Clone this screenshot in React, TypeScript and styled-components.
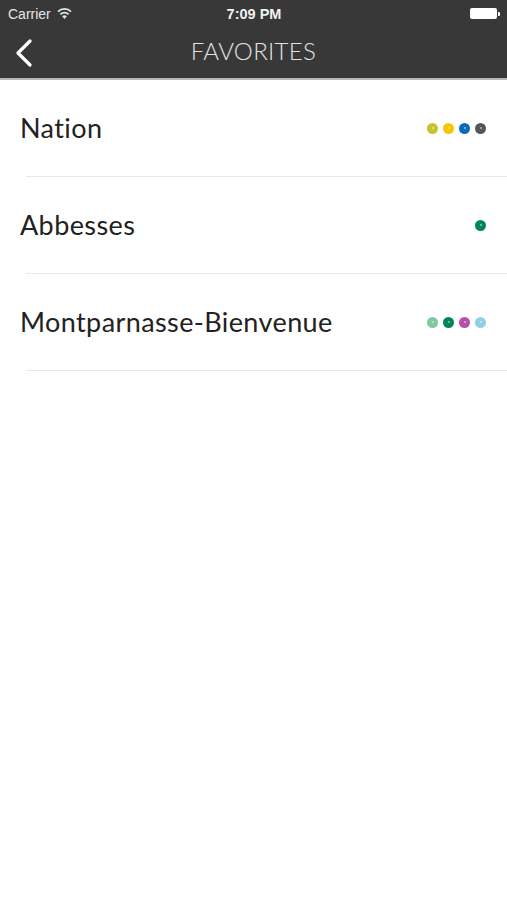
import * as React from 'react';
import styled, { createGlobalStyle } from 'styled-components';

const GlobalStyle = createGlobalStyle`
  html, body {
    margin: 0;
    padding: 0;
    background: #ffffff;
  }
  body {
    font-family: Lato, "Open Sans", "Liberation Sans", sans-serif;
  }
`;

const Screen = styled.div`
  width: 507px;
  height: 900px;
  background: #ffffff;
  display: flex;
  flex-direction: column;
`;

// barre de statut iOS
const StatusBar = styled.div`
  height: 27px;
  background: #383838;
  display: grid;
  grid-template-columns: 1fr auto 1fr;
  align-items: center;
  padding: 0 7px 0 8px;
  color: #ffffff;
  font-family: "Liberation Sans", Arial, sans-serif;
  font-size: 14px;
`;

const Carrier = styled.div`
  display: flex;
  align-items: center;
  gap: 6px;
  color: #e6e6e6;
`;

const Clock = styled.div`
  font-weight: 700;
  font-size: 14.5px;
  color: #f2f2f2;
`;

const BatteryWrap = styled.div`
  justify-self: end;
  display: flex;
  align-items: center;
  gap: 1px;
`;

const BatteryBody = styled.div`
  width: 27px;
  height: 11px;
  border-radius: 2px;
  background: #ffffff;
`;

const BatteryNub = styled.div`
  width: 2px;
  height: 4px;
  border-radius: 0 1px 1px 0;
  background: #ffffff;
`;

// barre de navigation
const NavBar = styled.div`
  height: 51px;
  background: #383838;
  border-bottom: 2px solid #b8b8b8;
  display: grid;
  grid-template-columns: 60px 1fr 60px;
  align-items: center;
`;

const BackButton = styled.div`
  display: flex;
  align-items: center;
  padding-left: 14px;
  height: 100%;
`;

const NavTitle = styled.div`
  text-align: center;
  color: #e2e2e2;
  font-size: 24px;
  font-weight: 300;
  letter-spacing: 0.3px;
  padding-bottom: 4px;
`;

const List = styled.div`
  display: flex;
  flex-direction: column;
`;

const Row = styled.div`
  height: 96px;
  display: flex;
  align-items: center;
  justify-content: space-between;
  padding: 0 20px 0 20px;
  position: relative;
  margin-bottom: 1px;
  &::after {
    content: '';
    position: absolute;
    left: 26px;
    right: 0;
    bottom: -1px;
    height: 1px;
    background: #e8e8e8;
  }
`;

const StationName = styled.div`
  font-size: 27px;
  letter-spacing: 0.4px;
  color: #222222;
  font-weight: 400;
  padding-bottom: 2px;
`;

const Lines = styled.div`
  display: flex;
  gap: 5px;
  padding-right: 1px;
`;

const Dot = styled.div<{ $color: string }>`
  width: 11px;
  height: 11px;
  border-radius: 50%;
  background: ${(p) => p.$color};
  display: flex;
  align-items: center;
  justify-content: center;
  &::before {
    content: '';
    width: 2px;
    height: 2px;
    border-radius: 50%;
    background: rgba(255, 255, 255, 0.55);
  }
`;

const favorites = [
  { name: 'Nation', lines: ['#c8c42e', '#f6c700', '#0a6cb8', '#565656'] },
  { name: 'Abbesses', lines: ['#00865a'] },
  {
    name: 'Montparnasse-Bienvenue',
    lines: ['#7fc99c', '#00855a', '#b64fa8', '#8fd0e2'],
  },
];

function WifiIcon() {
  return (
    <svg width="15" height="11" viewBox="0 0 15 11">
      <path d="M7.5 11 L5.2 8.3 A3.4 3.4 0 0 1 9.8 8.3 Z" fill="#e6e6e6" />
      <path
        d="M3.4 6.3 A5.9 5.9 0 0 1 11.6 6.3"
        stroke="#e6e6e6"
        strokeWidth="1.8"
        fill="none"
      />
      <path
        d="M1 3.6 A9.2 9.2 0 0 1 14 3.6"
        stroke="#e6e6e6"
        strokeWidth="1.8"
        fill="none"
      />
    </svg>
  );
}

function Chevron() {
  return (
    <svg width="20" height="28" viewBox="0 0 20 28">
      <path
        d="M16 2 L4 14 L16 26"
        stroke="#ffffff"
        strokeWidth="3.2"
        fill="none"
        strokeLinecap="round"
        strokeLinejoin="round"
      />
    </svg>
  );
}

export default function App() {
  return (
    <>
      <GlobalStyle />
      <Screen>
        <StatusBar>
          <Carrier>
            Carrier
            <WifiIcon />
          </Carrier>
          <Clock>7:09 PM</Clock>
          <BatteryWrap>
            <BatteryBody />
            <BatteryNub />
          </BatteryWrap>
        </StatusBar>
        <NavBar>
          <BackButton>
            <Chevron />
          </BackButton>
          <NavTitle>FAVORITES</NavTitle>
          <div />
        </NavBar>
        <List>
          {favorites.map((f) => (
            <Row key={f.name}>
              <StationName>{f.name}</StationName>
              <Lines>
                {f.lines.map((c, i) => (
                  <Dot key={i} $color={c} />
                ))}
              </Lines>
            </Row>
          ))}
        </List>
      </Screen>
    </>
  );
}
